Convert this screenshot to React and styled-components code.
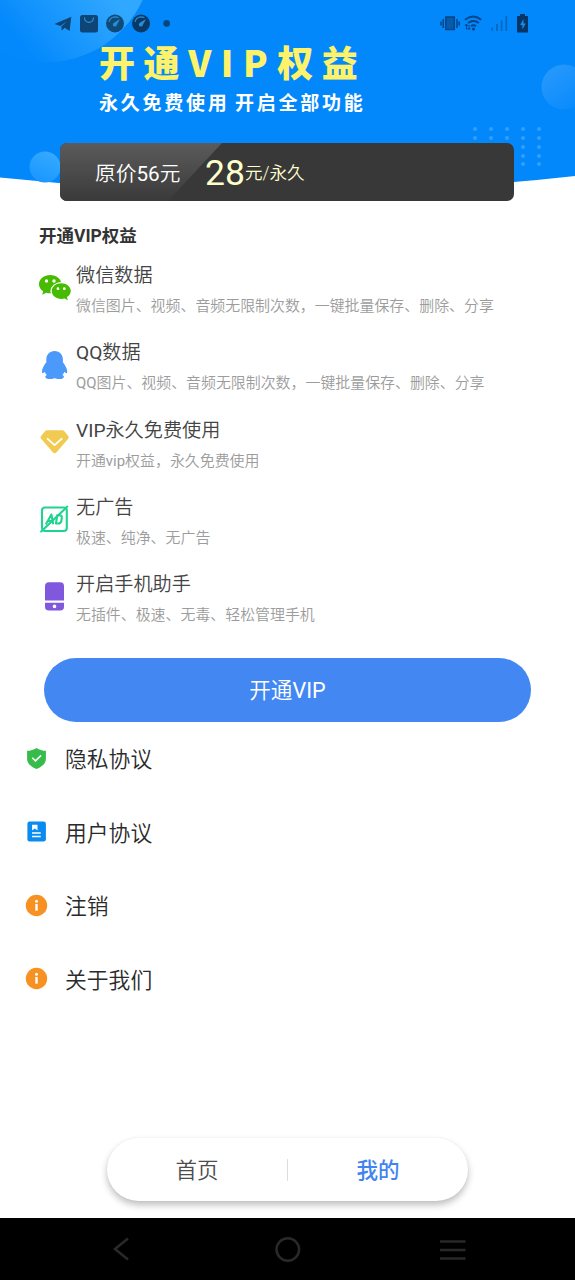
import React from 'react';
import styled, { createGlobalStyle } from 'styled-components';

const GlobalStyle = createGlobalStyle`
    body {
        margin: 0;
        background: #ffffff;
        font-family: Roboto, "Noto Sans CJK SC", sans-serif;
        font-weight: 350;
    }
`;

const Screen = styled.div`
    display: flex;
    flex-direction: column;
    width: 575px;
    height: 1280px;
    overflow: hidden;
    background: #ffffff;
`;

const Header = styled.header`
    position: relative;
    z-index: 0;
    flex: none;
    display: flex;
    flex-direction: column;
    height: 201px;
`;

const Backdrop = styled.svg`
    position: absolute;
    top: 0;
    left: 0;
    z-index: -1;
`;

const StatusBar = styled.div`
    display: flex;
    justify-content: space-between;
    height: 40px;
    padding: 0 45px 0 52px;
`;

const Banner = styled.div`
    height: 103px;
    padding-left: 99px;
    box-sizing: border-box;
    white-space: nowrap;
`;

const BannerTitle = styled.h1`
    margin: 0;
    font-family: "Noto Sans CJK SC", sans-serif;
    font-size: 36px;
    font-weight: 900;
    line-height: 42px;
    letter-spacing: 8.6px;
    color: #fff26b;
`;

const BannerLatin = styled.span`
    letter-spacing: 9.5px;
`;

const BannerSubtitle = styled.p`
    margin: 6px 0 0;
    font-family: "Noto Sans CJK SC", sans-serif;
    font-size: 19px;
    font-weight: 700;
    line-height: 28px;
    letter-spacing: 2.75px;
    word-spacing: -1.5px;
    color: #ffffff;
`;

const PriceCard = styled.div`
    position: relative;
    display: flex;
    align-items: center;
    width: 454px;
    height: 58px;
    margin-left: 60px;
    padding-left: 35px;
    box-sizing: border-box;
    border-radius: 7px;
    background: #383838;
    overflow: hidden;
`;

const Sheen = styled.svg`
    position: absolute;
    top: 0;
    left: 0;
`;

const OldPrice = styled.span`
    position: relative;
    width: 110px;
    padding-bottom: 1px;
    font-size: 20.7px;
    color: #ffffff;
`;

const Price = styled.span`
    padding-top: 2px;
    font-size: 35.5px;
    font-weight: 400;
    color: #ffffcc;
`;

const PriceUnit = styled.span`
    padding-bottom: 1px;
    font-size: 17.6px;
    color: #ffffcc;
`;

const Benefits = styled.section`
    padding: 20px 39px 0;
`;

const Heading = styled.h2`
    margin: 0 0 10px;
    font-size: 17.5px;
    font-weight: 700;
    line-height: 30px;
    color: #333333;
`;

const Benefit = styled.div`
    display: grid;
    grid-template-columns: 37px 1fr;
    height: 77.25px;
    white-space: nowrap;
`;

const BenefitIcon = styled.svg`
    width: 32px;
    height: 32px;
    margin-top: 10px;
`;

const BenefitTitle = styled.div`
    font-size: 19.15px;
    line-height: 30px;
    color: #444444;
`;

const BenefitText = styled.div`
    font-size: 14.93px;
    line-height: 30px;
    color: #9c9c9c;
`;

const Latin = styled.span`
    font-weight: 400;
`;

const OpenButton = styled.button`
    flex: none;
    width: 487px;
    height: 64px;
    margin: 10.5px 0 0 44px;
    padding: 0 0 2px;
    border: none;
    border-radius: 32px;
    background: #4287f2;
    color: #ffffff;
    font-family: inherit;
    font-size: 21.6px;
    font-weight: 350;
`;

const Menu = styled.nav`
    display: flex;
    flex-direction: column;
    flex: 1;
`;

const MenuItem = styled.div`
    display: flex;
    align-items: center;
    height: 73.6px;
    padding: 0 0 2px 25px;
    box-sizing: border-box;
    font-size: 21.8px;
    color: #2a2a2a;
`;

const MenuIcon = styled.svg`
    width: 23px;
    height: 23px;
    margin: 1px 17px 0 0;
`;

const TabBar = styled.div`
    flex: none;
    display: flex;
    align-items: center;
    width: 361px;
    height: 63px;
    margin: 0 auto 17px;
    border-radius: 32px;
    background: #ffffff;
    box-shadow: 0 4px 7px rgba(0, 0, 0, 0.25), 0 0 2px rgba(0, 0, 0, 0.06);
`;

const Tab = styled.span`
    flex: 1;
    padding-bottom: 2px;
    text-align: center;
    font-size: 21.5px;
    font-weight: ${props => (props.$active ? 500 : 350)};
    color: ${props => (props.$active ? '#4084f0' : '#4c4c4c')};
`;

const Divider = styled.span`
    width: 1px;
    height: 22px;
    background: #dddddd;
`;

const SystemNav = styled.div`
    flex: none;
    height: 62px;
    background: #000000;
`;

const benefits = [
    {
        title: '微信数据',
        text: '微信图片、视频、音频无限制次数，一键批量保存、删除、分享',
        icon: (
            <>
                <path d="M11.2 4C5 4 0 8 0 13.2c0 2.9 1.6 5.4 4.2 7.1L3.2 23.8l4-2.1c1.3.4 2.6.6 4 .6 6.2 0 11.2-4 11.2-9.1S17.4 4 11.2 4z" fill="#46bb00" />
                <ellipse cx="22.2" cy="20.2" rx="10.8" ry="9.2" fill="#ffffff" />
                <path d="M22.2 12.2c-5.3 0-9.5 3.4-9.5 7.8s4.2 7.9 9.5 7.9c1.3 0 2.3-.2 3.4-.5l3.2 1.8-.9-3.1c2.3-1.4 3.9-3.6 3.9-6.1 0-4.4-4.3-7.8-9.6-7.8z" fill="#46bb00" />
                <circle cx="7.5" cy="10" r="1.7" fill="#ffffff" />
                <circle cx="15" cy="10" r="1.7" fill="#ffffff" />
                <circle cx="19" cy="17.7" r="1.4" fill="#ffffff" />
                <circle cx="25.3" cy="17.7" r="1.4" fill="#ffffff" />
            </>
        )
    },
    {
        title: 'QQ数据',
        text: 'QQ图片、视频、音频无限制次数，一键批量保存、删除、分享',
        icon: (
            <path d="M15.6 3c-5.1 0-8.3 3.6-8.3 8.7v2.6c-1.9 2.5-4.3 6.3-4.3 9.1 0 1.3.4 1.9 1 1.7.6-.1 1.3-.7 1.9-1.4.3 1.2.9 2.3 1.9 3.2-1 .5-1.5 1.1-1.5 1.9 0 1.600 2 2.300 4.600 2.300 2 0 3.700-.3 4.700-1 1 .7 2.700 1 4.700 1 2.600 0 4.600-.7 4.600-2.300 0-.8-.5-1.400-1.500-1.900 1-.9 1.600-2 1.900-3.200.6.700 1.300 1.300 1.900 1.400.6.200 1-.4 1-1.700 0-2.800-2.400-6.600-4.300-9.100v-2.600C23.900 6.600 20.700 3 15.600 3z" fill="#4b99fb" />
        )
    },
    {
        title: 'VIP永久免费使用',
        text: '开通vip权益，永久免费使用',
        icon: (
            <>
                <path d="M8 4.3h15.5q1 0 1.7.8l4.2 5.1q1 1.300-.2 2.500L17.600 26.200q-1.900 1.900-3.800 0L2.100 12.700q-1.200-1.200-.2-2.500l4.300-5.100q.8-.8 1.800-.8z" fill="#f0ca51" />
                <path d="M8.600 12.800l7 6.300 7-6.300" fill="none" stroke="#ffffff" strokeWidth="1.8" strokeLinecap="round" strokeLinejoin="round" />
            </>
        )
    },
    {
        title: '无广告',
        text: '极速、纯净、无广告',
        icon: (
            <g fill="none" stroke="#1fd391" strokeWidth="2.1" strokeLinecap="round" strokeLinejoin="round">
                <rect x="3" y="4.5" width="24.8" height="23.5" rx="3" />
                <path d="M2.2 28.5L28.3 3.6" />
                <path d="M7.200 20.700l5.200-9.200 1.600 8.900M8.900 18h5" />
                <path d="M18.200 12.300l-1.200 8.200h2.200c1.700 0 2.800-.9 3.100-2.500l.5-2.900c.3-1.800-.5-2.800-2.300-2.800z" />
            </g>
        )
    },
    {
        title: '开启手机助手',
        text: '无插件、极速、无毒、轻松管理手机',
        icon: (
            <>
                <path d="M10 2.200h11.200q3.800 0 3.800 3.800v14.500H6V6q0-3.800 4-3.800z" fill="#7f58dd" />
                <path d="M6 22.700h19v4q0 3.800-3.800 3.800H10q-4 0-4-3.800z" fill="#7f58dd" />
                <circle cx="15.5" cy="26.4" r="1.8" fill="#ffffff" />
            </>
        )
    }
];

const infoIcon = (
    <>
        <circle cx="11.5" cy="11.5" r="10.7" fill="#f79122" />
        <circle cx="11.5" cy="7.2" r="1.5" fill="#ffffff" />
        <path d="M11.5 9.9v6.8" fill="none" stroke="#ffffff" strokeWidth="2.4" />
    </>
);

const menu = [
    {
        label: '隐私协议',
        icon: (
            <>
                <path d="M11.5.9c3 1.9 6 2.7 9.4 2.9v8.3c0 4.6-4.3 7.7-9.4 10-5.1-2.300-9.400-5.400-9.400-10V3.800c3.400-.2 6.400-1 9.400-2.900z" fill="#37bb4a" />
                <path d="M7.2 10.7l3.300 3.200 5.600-5.500" fill="none" stroke="#ffffff" strokeWidth="1.5" />
            </>
        )
    },
    {
        label: '用户协议',
        icon: (
            <>
                <rect x="2.4" y="1.5" width="18.5" height="20" rx="2.3" fill="#098bf0" />
                <path d="M7.1 4.8h5.4v5.6l-2.7-2-2.7 2z" fill="#ffffff" />
                <path d="M7 12.9h8.7M7 16.5h8.7" stroke="#ffffff" strokeWidth="1.5" />
            </>
        )
    },
    { label: '注销', icon: infoIcon },
    { label: '关于我们', icon: infoIcon }
];

// Roboto has no weight between light and regular, so latin runs are set on their own
const mixed = text => text.split(/([A-Za-z0-9]+)/).map((part, i) => (i % 2 ? <Latin key={i}>{part}</Latin> : part));

const dots = [475, 491, 507, 523, 539].flatMap(x => [129, 138, 147, 156, 164].map(y => [x, y]));

const HeaderBackdrop = () => (
    <Backdrop width="575" height="201" viewBox="0 0 575 201">
        <defs>
            <linearGradient id="smallBubble" x1="0.8" y1="0" x2="0.3" y2="1">
                <stop offset="0" stopColor="#36abff" />
                <stop offset="1" stopColor="#1996ff" />
            </linearGradient>
            <linearGradient id="sideBubble" x1="0.2" y1="0.2" x2="0.8" y2="1">
                <stop offset="0" stopColor="#2497fc" />
                <stop offset="1" stopColor="#078afd" />
            </linearGradient>
            <linearGradient id="corner" gradientUnits="userSpaceOnUse" x1="115" y1="0" x2="40" y2="65">
                <stop offset="0" stopColor="#31a8ff" />
                <stop offset="1" stopColor="#0489fc" />
            </linearGradient>
        </defs>
        <path d="M0 0H575V176Q288 208 0 177.5z" fill="#0288fb" />
        <circle cx="45" cy="-45" r="107.5" fill="url(#corner)" />
        <circle cx="45" cy="167" r="15.5" fill="url(#smallBubble)" />
        <circle cx="564" cy="87" r="22.5" fill="url(#sideBubble)" />
        {dots.map(([x, y]) => (
            <circle key={`${x}-${y}`} cx={x} cy={y} r="2.1" fill="#2f9ffe" />
        ))}
    </Backdrop>
);

const StatusLeft = () => (
    <svg width="125" height="40" viewBox="52 0 125 40" fill="#0c4576">
        <path d="M54.5 24L71.300 16.800 69.600 31l-4.900-3.200-3 2.700-.3-4.100 5.500-5.200-6.500 4.800z" />
        <rect x="80" y="15" width="18" height="17.5" rx="2.5" />
        <path d="M84.5 17.5c0 6.4 9 6.4 9 0" fill="none" stroke="#2a91dc" strokeWidth="1.2" />
        {[115, 141].map((x, i) => (
            <g key={x} fill={i ? '#073968' : '#0f4b78'}>
                <circle cx={x} cy="23.5" r="9" />
                <path d={`M${x - 6} 22q1-5 6-5.2 2 0 3.5 1`} fill="none" stroke="#2b8bd3" strokeWidth="1.2" />
                <path d={`M${x + 5} 19l-3.2 6a2 2 0 1 1-2.9-2.2z`} fill="#2b8bd3" />
            </g>
        ))}
        <circle cx="166.7" cy="23.4" r="3.3" fill="#064580" />
    </svg>
);

const StatusRight = () => (
    <svg width="92" height="40" viewBox="438 0 92 40" fill="none" stroke="#044588" strokeWidth="1.5">
        <rect x="445.8" y="17" width="8.5" height="12.5" fill="#075ba9" />
        <path d="M443.200 19v9M441 21.500v4M457 19v9M459.200 21.500v4" />
        <path d="M465 19.700q8-6.500 16.200 0M468 23q5.500-4 10.800 0M471 26.200q2.500-1.700 5 0" strokeWidth="2" />
        <circle cx="473.5" cy="29" r="1.5" fill="#044588" stroke="none" />
        <path d="M466.500 24v5.500M464.800 26l1.700-2 1.700 2M469 25v4.500M467.500 28l1.500 1.600 1.400-1.600" strokeWidth="1" />
        <path d="M492.200 27.500V31M497 24v7M501.600 20.500V31M506.300 16v15" stroke="#0567bd" strokeWidth="1.7" />
        <path d="M520 14h5v2h3v16.500h-11V16h3z" fill="#063567" stroke="none" />
        <path d="M523.500 19l-3.300 6h2.200v4.500l3.300-6h-2.200z" fill="#1b8ce9" stroke="none" />
    </svg>
);

const App = () => {
    return (
        <>
            <GlobalStyle />
            <Screen>
                <Header>
                    <HeaderBackdrop />
                    <StatusBar>
                        <StatusLeft />
                        <StatusRight />
                    </StatusBar>
                    <Banner>
                        <BannerTitle>开通<BannerLatin>VIP</BannerLatin>权益</BannerTitle>
                        <BannerSubtitle>永久免费使用 开启全部功能</BannerSubtitle>
                    </Banner>
                    <PriceCard>
                        <Sheen width="170" height="58" viewBox="0 0 170 58">
                            <defs>
                                <linearGradient id="sheen" x1="0" y1="0" x2="0" y2="1">
                                    <stop offset="0" stopColor="#5b5b5b" />
                                    <stop offset="1" stopColor="#3a3a3a" />
                                </linearGradient>
                            </defs>
                            <path d="M0 0H162L108 58H0z" fill="url(#sheen)" />
                        </Sheen>
                        <OldPrice>{mixed('原价56元')}</OldPrice>
                        <Price>28</Price>
                        <PriceUnit>元/永久</PriceUnit>
                    </PriceCard>
                </Header>
                <Benefits>
                    <Heading>开通VIP权益</Heading>
                    {benefits.map(item => (
                        <Benefit key={item.title}>
                            <BenefitIcon viewBox="0 0 32 32">{item.icon}</BenefitIcon>
                            <div>
                                <BenefitTitle>{mixed(item.title)}</BenefitTitle>
                                <BenefitText>{mixed(item.text)}</BenefitText>
                            </div>
                        </Benefit>
                    ))}
                </Benefits>
                <OpenButton>{mixed('开通VIP')}</OpenButton>
                <Menu>
                    {menu.map(item => (
                        <MenuItem key={item.label}>
                            <MenuIcon viewBox="0 0 23 23">{item.icon}</MenuIcon>
                            {item.label}
                        </MenuItem>
                    ))}
                </Menu>
                <TabBar>
                    <Tab>首页</Tab>
                    <Divider />
                    <Tab $active>我的</Tab>
                </TabBar>
                <SystemNav>
                    <svg width="575" height="62" viewBox="0 0 575 62" fill="none" stroke="#292929" strokeWidth="2.5">
                        <path d="M128 20.5L115 31l13 10.5" />
                        <circle cx="287.8" cy="31.5" r="11.3" />
                        <path d="M440 23.5h25.500M440 32h25.500M440 40.500h25.500" />
                    </svg>
                </SystemNav>
            </Screen>
        </>
    );
};

export default App;
